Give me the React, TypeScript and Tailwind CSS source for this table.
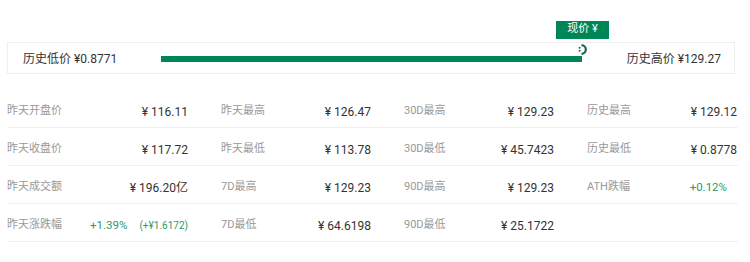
import React from "react";

const FONT = "font-['Roboto','Noto_Sans_CJK_SC',sans-serif]";

type Cell = { label: string; value?: React.ReactNode; green?: boolean; pr?: boolean };

const rows: Cell[][] = [
  [
    { label: "昨天开盘价", value: "¥ 116.11" },
    { label: "昨天最高", value: "¥ 126.47" },
    { label: "30D最高", value: "¥ 129.23" },
    { label: "历史最高", value: "¥ 129.12" },
  ],
  [
    { label: "昨天收盘价", value: "¥ 117.72" },
    { label: "昨天最低", value: "¥ 113.78" },
    { label: "30D最低", value: "¥ 45.7423" },
    { label: "历史最低", value: "¥ 0.8778" },
  ],
  [
    { label: "昨天成交额", value: "¥ 196.20亿" },
    { label: "7D最高", value: "¥ 129.23" },
    { label: "90D最高", value: "¥ 129.23" },
    { label: "ATH跌幅", value: "+0.12%", green: true, pr: true },
  ],
  [
    {
      label: "昨天涨跌幅",
      value: (
        <span className="flex items-center gap-[12px] text-[#2a9a6c]">
          <span className="text-[11.5px]">+1.39%</span>
          <span className="text-[10px]">(+¥1.6172)</span>
        </span>
      ),
    },
    { label: "7D最低", value: "¥ 64.6198" },
    { label: "90D最低", value: "¥ 25.1722" },
    { label: "" },
  ],
];

function Marker() {
  return (
    <svg width="10" height="11" viewBox="0 0 10 11" className="block">
      <path d="M4.5 1.2 A4.3 4.3 0 0 1 4.5 9.8" fill="none" stroke="#0f6b47" strokeWidth="2.2" />
      <circle cx="2.6" cy="3.8" r="1" fill="#0f6b47" />
      <circle cx="2.6" cy="6.8" r="1" fill="#0f6b47" />
    </svg>
  );
}

export default function App() {
  return (
    <div className={`${FONT} w-[750px] h-[262px] bg-white px-[7px] pt-[42px]`}>
      <div className="relative flex h-[32px] w-[728px] items-center border border-[#eeeeee] pl-[15px] pr-[13px] pt-[1px] text-[12px] text-[#333]">
        <span className="w-[138px] shrink-0">历史低价 ¥0.8771</span>
        <div className="relative h-[6px] w-[421px] bg-[#008556]">
          <div className="absolute -right-[5px] -top-[12px]">
            <Marker />
          </div>
          <div className="absolute -right-[27px] -top-[35px] flex h-[18px] w-[53px] items-center justify-center bg-[#008556] text-[11px] text-white">
            现价 ¥
          </div>
        </div>
        <span className="ml-auto">历史高价 ¥129.27</span>
      </div>

      <div className="mt-[16px] w-[731px]">
        {rows.map((row, i) => (
          <div
            key={i}
            className="grid h-[38px] grid-cols-[181px_150px_150px_150px] items-center gap-x-[33px] border-b border-[#f0f0f0] pt-[6px]"
          >
            {row.map((c, j) => (
              <div key={j} className="flex items-center justify-between text-[11px]">
                <span className="text-[#999]">{c.label}</span>
                {c.value !== undefined && (
                  <span className={`${c.green ? "text-[#2a9a6c] text-[11.5px]" : "text-[#333] text-[12px]"} ${c.pr ? "mr-[10px]" : ""}`}>
                    {c.value}
                  </span>
                )}
              </div>
            ))}
          </div>
        ))}
      </div>
    </div>
  );
}
